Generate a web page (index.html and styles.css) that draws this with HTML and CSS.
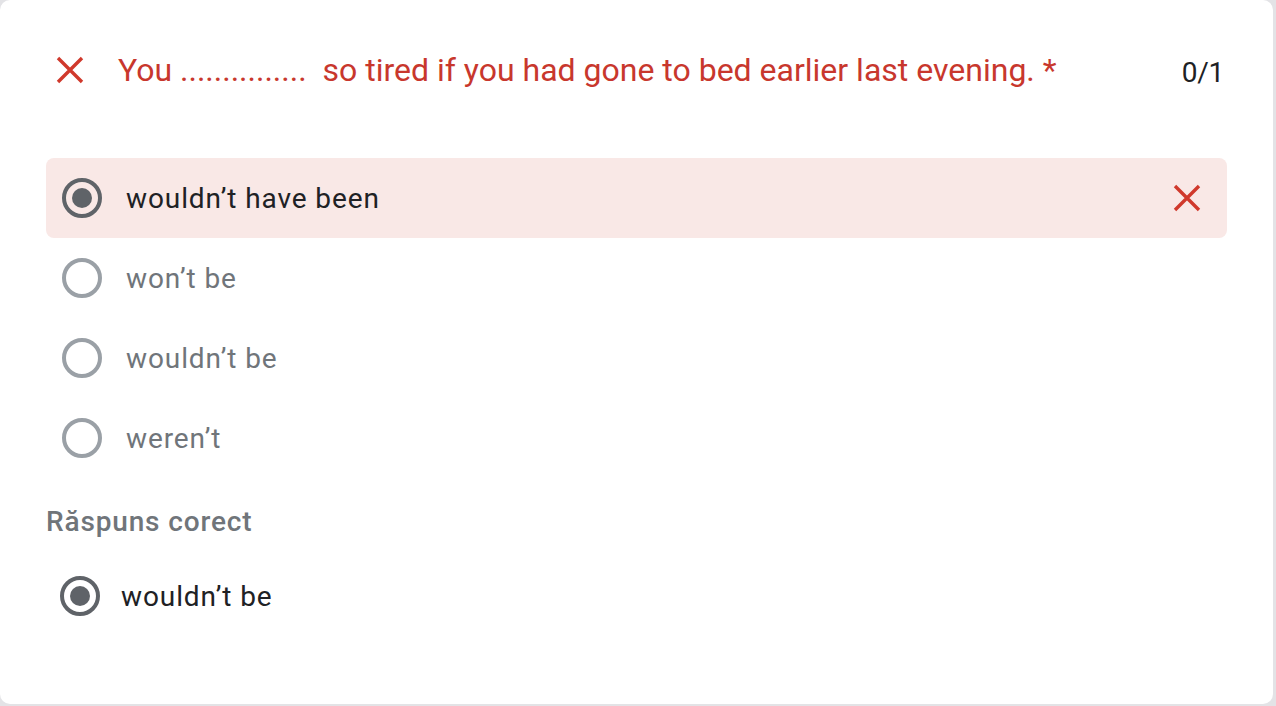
FILE: index.html
```html
<!DOCTYPE html>
<html lang="en">
<head>
<meta charset="utf-8">
<title>Quiz question</title>
<link rel="stylesheet" href="styles.css">
</head>
<body>
<div class="card">
  <div class="header">
    <span class="icon-box">
      <svg class="x-icon" width="28" height="28" viewBox="0 0 28 28"><path d="M2 2 L26 26 M26 2 L2 26" /></svg>
    </span>
    <div class="question">You ...............&nbsp; so tired if you had gone to bed earlier last evening. *</div>
    <div class="score">0/1</div>
  </div>

  <div class="options">
    <div class="option wrong">
      <span class="radio checked"></span>
      <span class="label">wouldn’t have been</span>
      <svg class="x-icon mark" width="28" height="28" viewBox="0 0 28 28"><path d="M2 2 L26 26 M26 2 L2 26" /></svg>
    </div>
    <div class="option">
      <span class="radio"></span>
      <span class="label muted">won’t be</span>
    </div>
    <div class="option">
      <span class="radio"></span>
      <span class="label muted">wouldn’t be</span>
    </div>
    <div class="option">
      <span class="radio"></span>
      <span class="label muted">weren’t</span>
    </div>
  </div>

  <div class="correct-title">Răspuns corect</div>
  <div class="option correct">
    <span class="radio checked"></span>
    <span class="label">wouldn’t be</span>
  </div>
</div>
</body>
</html>
```

FILE: styles.css
```css
html, body {
  margin: 0;
  padding: 0;
}
body {
  background: #e3e3e6;
  width: 1276px;
  height: 706px;
  overflow: hidden;
  font-family: Roboto, "Liberation Sans", Arial, sans-serif;
}
.card {
  box-sizing: border-box;
  width: 1273px;
  height: 704px;
  background: #ffffff;
  border-radius: 10px;
  padding: 46px 46px 0 46px;
}
.header {
  display: flex;
  align-items: center;
  height: 48px;
}
.icon-box {
  width: 48px;
  height: 48px;
  display: flex;
  align-items: center;
  justify-content: center;
  flex: none;
}
.x-icon path {
  stroke: #d0392c;
  stroke-width: 3.4;
  fill: none;
}
.question {
  margin-left: 24px;
  flex: 1;
  color: #c8372d;
  font-size: 32px;
  line-height: 48px;
}
.score {
  color: #202124;
  font-size: 28px;
  padding-right: 3px;
  margin-top: 4px;
  letter-spacing: -0.3px;
}
.options {
  margin-top: 64px;
  display: flex;
  flex-direction: column;
}
.option {
  display: flex;
  align-items: center;
  height: 80px;
  padding-left: 16px;
  padding-right: 26px;
  border-radius: 8px;
}
.option.wrong {
  background: #f9e8e6;
}
.radio {
  box-sizing: border-box;
  width: 40px;
  height: 40px;
  border-radius: 50%;
  border: 4px solid #9aa0a6;
  flex: none;
  display: flex;
  align-items: center;
  justify-content: center;
}
.radio.checked {
  border-color: #5f6368;
}
.radio.checked::after {
  content: "";
  width: 20px;
  height: 20px;
  border-radius: 50%;
  background: #5f6368;
}
.label {
  margin-left: 24px;
  flex: 1;
  font-size: 28px;
  letter-spacing: 0.9px;
  color: #202124;
}
.label.muted {
  color: #70757a;
}
.mark {
  flex: none;
}
.correct-title {
  margin-top: 24px;
  font-size: 28px;
  line-height: 40px;
  font-weight: 500;
  letter-spacing: 0.85px;
  color: #70757a;
}
.option.correct {
  margin-top: 14px;
  padding-left: 14px;
}
.option.correct .label {
  margin-left: 21px;
}
```
